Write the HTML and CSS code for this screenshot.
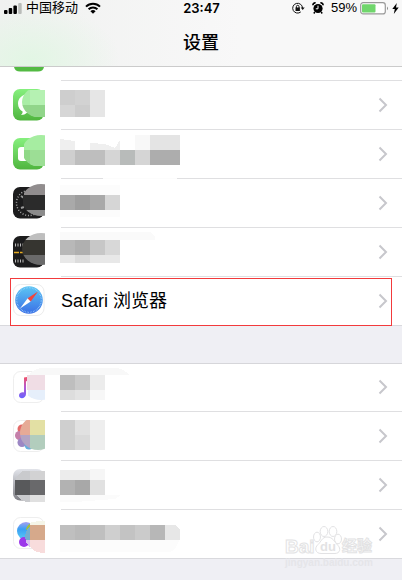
FILE: index.html
```html
<!DOCTYPE html>
<html lang="zh-CN">
<head>
<meta charset="utf-8">
<meta name="viewport" content="width=device-width, initial-scale=1">
<title>设置</title>
<link rel="stylesheet" href="styles.css">
</head>
<body>
<svg class="defs" aria-hidden="true">
  <defs>
    <linearGradient id="green" x2="0" y2="1"><stop stop-color="#86f07e"/><stop offset="1" stop-color="#4fb53e"/></linearGradient>
    <linearGradient id="blue" x2="0" y2="1"><stop stop-color="#5cc6f4"/><stop offset="1" stop-color="#3a6fe6"/></linearGradient>
    <linearGradient id="note" x2="0" y2="1"><stop stop-color="#f8505e"/><stop offset=".5" stop-color="#b45ad0"/><stop offset="1" stop-color="#6a62ff"/></linearGradient>
    <linearGradient id="silver" x2="0" y2="1"><stop stop-color="#e2e4ea"/><stop offset="1" stop-color="#808086"/></linearGradient>
    <linearGradient id="sphere" x2="0" y2="1"><stop stop-color="#a8a0f0"/><stop offset=".4" stop-color="#3aa0f4"/><stop offset="1" stop-color="#58cdf6"/></linearGradient>
    <clipPath id="veil"><ellipse cx="28" cy="13" rx="19" ry="16"/></clipPath>
    <clipPath id="veil-wide"><ellipse cx="25" cy="13" rx="18" ry="17"/></clipPath>
    <symbol id="chevron" viewBox="0 0 10 16"><path d="M1.500 1.500 8 8l-6.500 6.500" fill="none" stroke="#c7c7cc" stroke-width="2"/></symbol>
  </defs>
</svg>

<header class="header">
  <div class="status">
    <div class="status-left">
      <svg width="19" height="12" viewBox="0 0 19 12"><rect y="8" width="3.500" height="4" rx="1"/><rect x="4.700" y="6" width="3.500" height="6" rx="1"/><rect x="9.400" y="3.500" width="3.500" height="8.500" rx="1"/><rect x="14.200" y="1" width="3.500" height="11" rx="1" fill="#b9bcb9"/></svg>
      <span class="carrier">中国移动</span>
      <svg width="16" height="12" viewBox="0 0 16 12" fill="none" stroke="#000" stroke-width="2"><path d="M1 4.600a10 10 0 0 1 14 0M3.600 7.300a6.300 6.300 0 0 1 8.800 0"/><path d="M8 11.800 5.400 9.200a3.700 3.700 0 0 1 5.200 0z" fill="#000" stroke="none"/></svg>
    </div>
    <time class="time">23:47</time>
    <div class="status-right">
      <svg width="13" height="13" viewBox="0 0 13 13" fill="none" stroke="#111"><path d="M10.500 6A4.900 4.900 0 1 0 8.800 9.900"/><path d="M8.700 5.500h4L10.700 8z" fill="#111" stroke="none"/><rect x="3.500" y="5.500" width="4.400" height="3.500" fill="#111" stroke="none"/><path d="M4.400 6V4.600a1.300 1.300 0 0 1 2.600 0V6"/></svg>
      <svg class="alarm" width="12" height="12" viewBox="0 0 12 12"><circle cx="6" cy="6.500" r="4.600"/><path d="M.8 3.300A2.600 2.600 0 0 1 3.600.7M11.200 3.300A2.600 2.600 0 0 0 8.400.7M2.800 10l-1 1.500M9.200 10l1 1.500" stroke="#000" stroke-width="1.400"/><path d="M6 3.600v3.200H3.800" fill="none" stroke="#fff"/></svg>
      <span>59%</span>
      <svg width="29" height="13" viewBox="0 0 29 13"><rect x=".7" y=".7" width="24.600" height="11.200" rx="2.500" fill="#fff" stroke="#999" stroke-width="1.200"/><rect x="2" y="2.200" width="13.500" height="8.200" rx="1" fill="#70d66c"/><path d="M27 4.500v3.800q2-1.900 0-3.800" fill="#888"/></svg>
      <svg width="7" height="11" viewBox="0 0 7 11"><path d="M4.800 0 .3 6h2.500L1.800 11 6.700 4.600H4z"/></svg>
    </div>
  </div>
  <h1 class="title">设置</h1>
</header>

<main>
  <ul class="list list-first">
    <li class="row row-cut">
      <svg class="icon icon-cut" viewBox="0 0 32 5" aria-hidden="true"><path d="M1 0h30q-1 4.500-6 4.500H7Q2 4.500 1 0" fill="#53ba43"/></svg>
      <div class="body"></div>
    </li>
    <li class="row">
      <svg class="icon" viewBox="0 0 32 32" aria-hidden="true">
        <rect width="31" height="31.500" rx="7" fill="url(#green)"/>
        <path d="M16 5C9 5 5 9.500 5 14.500c0 4 2 6.500 4.600 8 .2 1.500-.7 2.500-1.600 3.500 2.500 0 4.500-1 5.500-2H20V5z" fill="#fff"/>
        <g clip-path="url(#veil)" shape-rendering="crispEdges"><path d="M9 1h23v15H9z" fill="#a9eda6"/><path d="M17 1h15v15H17z" fill="#b5f1b2"/><path d="M9 16h23v12H9z" fill="#91d58a"/></g>
      </svg>
      <div class="body">
        <svg class="mosaic" width="130" height="48" aria-hidden="true" shape-rendering="crispEdges"><path d="M0 9h30v15H0z" fill="#cecece"/><path d="M15 9h15v15H15z" fill="#d2d2d2"/><path d="M30 9h15v27H30z" fill="#e6e6e6"/><path d="M0 24h15v12H0z" fill="#d6d6d6"/><path d="M15 24h15v12H15z" fill="#cdcdcd"/></svg>
        <svg class="chevron"><use href="#chevron"/></svg>
      </div>
    </li>
    <li class="row">
      <svg class="icon" viewBox="0 0 32 32" aria-hidden="true">
        <rect width="31" height="31.500" rx="7" fill="url(#green)"/><rect x="5" y="9" width="15" height="14" rx="3" fill="#fff"/>
        <g clip-path="url(#veil)" shape-rendering="crispEdges"><path d="M11-3h21v15H11z" fill="#a6eda1"/><path d="M11 12h21v16H11z" fill="#8fd887"/><path d="M17 12h15v16H17z" fill="#9cde95"/></g>
      </svg>
      <div class="body">
        <svg class="mosaic" width="130" height="48" aria-hidden="true" shape-rendering="crispEdges"><path d="M0 9l15 2v9H0zM30 13l15 1 10 4 5-8v10H30z" fill="#efefef"/><path d="M75 5h15v15H75z" fill="#f8f8f8"/><path d="M90 5h30v15H90z" fill="#e4e4e4"/><path d="M0 20h15v15H0z" fill="#cfcfcf"/><path d="M15 20h30v15H15z" fill="#bebebe"/><path d="M45 20h15v15H45zM75 20h15v15H75z" fill="#d5d5d5"/><path d="M60 20h15v15H60z" fill="#b8bbba"/><path d="M90 20h30v15H90z" fill="#adadad"/><path d="M43 48h74v1H43z" fill="#fcfcfc"/></svg>
        <svg class="chevron"><use href="#chevron"/></svg>
      </div>
    </li>
    <li class="row">
      <svg class="icon" viewBox="0 0 32 32" aria-hidden="true">
        <rect width="31" height="31.500" rx="7" fill="#1c1c1d"/><circle cx="16" cy="16" r="12.500" fill="none" stroke="#aaa" stroke-width="1.500" stroke-dasharray="1 1.800"/><path d="M8 9l3 2M8 21l3-1" stroke="#999" stroke-width="2"/>
        <g clip-path="url(#veil)" shape-rendering="crispEdges"><path d="M11-3h21V8H11z" fill="#918d8e"/><path d="M10 8h22v15H10z" fill="#2b2b2b"/><path d="M11 23h21v6H11z" fill="#8b8b8b"/></g>
      </svg>
      <div class="body">
        <svg class="mosaic" width="130" height="48" aria-hidden="true" shape-rendering="crispEdges"><path d="M0 6h60v32H0z" fill="#fcfcfc"/><path d="M0 16h45v15H0z" fill="#a9a9a9"/><path d="M15 16h15v15H15z" fill="#9e9e9e"/><path d="M45 16h15v15H45z" fill="#d6d6d6"/></svg>
        <svg class="chevron"><use href="#chevron"/></svg>
      </div>
    </li>
    <li class="row">
      <svg class="icon" viewBox="0 0 32 32" aria-hidden="true">
        <rect width="31" height="31.500" rx="7" fill="#1c1c1d"/><path d="M2 9h10M2 25h10" stroke="#bbb" stroke-width="3" stroke-dasharray="1 1.500"/><path d="M1 16.500h9" stroke="#e6ac22" stroke-width="1.500" stroke-dasharray="5 1"/>
        <g clip-path="url(#veil)" shape-rendering="crispEdges"><path d="M9-5h23V4H9z" fill="#bebebe"/><path d="M9 4h23v15H9z" fill="#363530"/><path d="M9 19h23v11H9z" fill="#6a6a6a"/></g>
      </svg>
      <div class="body">
        <svg class="mosaic" width="130" height="48" aria-hidden="true" shape-rendering="crispEdges"><path d="M0 4h90l5 5v3H0z" fill="#fafafa"/><path d="M0 12h15v15H0z" fill="#b8b8b8"/><path d="M15 12h15v15H15z" fill="#b0b0b0"/><path d="M30 12h15v15H30z" fill="#c7c7c7"/><path d="M45 12h15v15H45z" fill="#d8d8d8"/><path d="M0 27h60v8H0z" fill="#e8e8e8"/><path d="M15 27h15v8H15z" fill="#dcdcdc"/></svg>
        <svg class="chevron"><use href="#chevron"/></svg>
      </div>
    </li>
    <li class="row row-marked">
      <svg class="icon" viewBox="0 0 32 32" aria-hidden="true">
        <rect x=".5" y="-.5" width="30.500" height="31" rx="7" fill="#fff" stroke="#ececec"/><circle cx="16" cy="15" r="13.800" fill="url(#blue)"/><circle cx="16" cy="15" r="12.300" fill="none" stroke="#a4d4fa" stroke-width="1.200" stroke-dasharray=".6 1"/><path d="M7 23.500 14.700 13.300l3 3.200z" fill="#fff"/><path d="M25 6.500 14.700 13.300l3 3.200z" fill="#f2453c"/>
      </svg>
      <div class="body">
        <a class="label" href="#safari">Safari 浏览器</a>
        <svg class="chevron"><use href="#chevron"/></svg>
      </div>
    </li>
  </ul>

  <ul class="list list-second">
    <li class="row">
      <svg class="icon" viewBox="0 0 32 32" aria-hidden="true">
        <rect x=".5" y=".5" width="30.500" height="31" rx="7" fill="#fff" stroke="#eee"/><path d="M11 6.500 20 5v4l-7 1.200V23c0 5-7 5.500-7 1.500 0-2.800 3-3.500 5-3z" fill="url(#note)"/>
        <g clip-path="url(#veil)" shape-rendering="crispEdges"><path d="M14 4h18v15H14z" fill="#f0dde5"/><path d="M15 19h17v11H15z" fill="#e6effb"/></g>
      </svg>
      <div class="body">
        <svg class="mosaic" width="130" height="48" aria-hidden="true" shape-rendering="crispEdges"><path d="M-30 10q6-5 14-5h74q7 2 11 7H-30z" fill="#f8f8f8"/><path d="M0 12h15v15H0z" fill="#bebebe"/><path d="M15 12h15v15H15z" fill="#cacaca"/><path d="M30 12h15v15H30z" fill="#ececec"/><path d="M0 27h15v10H0z" fill="#ddd"/><path d="M15 27h15v10H15z" fill="#e3e3e3"/><path d="M30 27h15v10H30z" fill="#f7f7f7"/></svg>
        <svg class="chevron"><use href="#chevron"/></svg>
      </div>
    </li>
    <li class="row">
      <svg class="icon" viewBox="0 0 32 32" aria-hidden="true">
        <rect x=".5" y=".5" width="30.500" height="31" rx="7" fill="#fff" stroke="#eee"/><circle cx="9" cy="9" r="4.500" fill="#e36b69"/><circle cx="6.500" cy="15.500" r="4.500" fill="#c580aa"/><circle cx="9" cy="22.500" r="4.500" fill="#9c87c4"/><circle cx="16" cy="25" r="4.500" fill="#68aedc"/>
        <g clip-path="url(#veil-wide)" shape-rendering="crispEdges"><path d="M7 0h10v15H7z" fill="#e6aa96"/><path d="M17 0h15v15H17z" fill="#e3e0a4"/><path d="M7 15h10v14H7z" fill="#b3a4c3"/><path d="M17 15h15v15H17z" fill="#b2cdbd"/></g>
      </svg>
      <div class="body">
        <svg class="mosaic" width="130" height="48" aria-hidden="true" shape-rendering="crispEdges"><path d="M0 8h15v30H0z" fill="#cfcfcf"/><path d="M15 8h15v15H15z" fill="#e1e1e1"/><path d="M15 23h15v15H15z" fill="#dadada"/><path d="M30 8h15v30H30z" fill="#eee"/></svg>
        <svg class="chevron"><use href="#chevron"/></svg>
      </div>
    </li>
    <li class="row">
      <svg class="icon" viewBox="0 0 32 32" aria-hidden="true">
        <rect width="31" height="31.500" rx="7" fill="url(#silver)"/>
        <g shape-rendering="crispEdges"><path d="M4 7l5-5h8v9H3zM4 26h28v7H16q-8 0-12-7" fill="#c9cacd"/><path d="M17 2h15v9H17z" fill="#d2d2d3"/><path d="M17 26h15v7H17z" fill="#e0e0e0"/><path d="M2 11h15v15H2z" fill="#58595b"/><path d="M17 11h15v15H17z" fill="#69696b"/></g>
      </svg>
      <div class="body">
        <svg class="mosaic" width="130" height="48" aria-hidden="true" shape-rendering="crispEdges"><path d="M0 34h61l-6 4-40 3H0z" fill="#fbfbfb"/><path d="M0 9h30v10H0z" fill="#ececec"/><path d="M30 8h15v11H30z" fill="#f6f6f6"/><path d="M0 19h15v15H0z" fill="#b2b2b2"/><path d="M15 19h15v15H15z" fill="#a8a8a8"/><path d="M30 19h15v15H30z" fill="#e1e1e1"/></svg>
        <svg class="chevron"><use href="#chevron"/></svg>
      </div>
    </li>
    <li class="row">
      <svg class="icon" viewBox="0 0 32 32" aria-hidden="true">
        <rect x=".5" y="-.5" width="30.500" height="31" rx="7" fill="#fff" stroke="#eee"/><circle cx="13" cy="13" r="9" fill="url(#sphere)"/><circle cx="11" cy="24" r="5" fill="#9c38ea"/><path d="M13 12q1-7 8-7l5 1-9 6z" fill="#a5bd38"/>
        <g shape-rendering="crispEdges"><path d="M17 5q4-2 15-2v4H17z" fill="#f5f5e8"/><path d="M12 19q1-8 5-11v14h-4z" fill="#74add0"/><path d="M17 7h15v15H17z" fill="#d6a98b"/><path d="M13 22h4v7q-4-3-4-7" fill="#d9c0f0"/><path d="M17 22h15v13q-10 0-15-6z" fill="#f8dcdc"/></g>
      </svg>
      <div class="body">
        <svg class="mosaic" width="130" height="48" aria-hidden="true" shape-rendering="crispEdges"><path d="M0 30h119q-2 9-9 12H0z" fill="#fcfcfc"/><path d="M0 15h105v15H0z" fill="#bfbfbf"/><path d="M15 15h15v15H15z" fill="#bababa"/><path d="M45 15h15v15H45z" fill="#cfcfcf"/><path d="M60 15h15v15H60z" fill="#c3c3c3"/><path d="M75 15h15v15H75z" fill="#cbcbcb"/><path d="M90 15h15v15H90z" fill="#b7b7b7"/><path d="M105 15h10l5 5v10h-15z" fill="#e7e7e7"/></svg>
        <svg class="chevron"><use href="#chevron"/></svg>
      </div>
    </li>
  </ul>
</main>

<svg class="watermark" viewBox="0 0 90 44" aria-hidden="true">
  <g fill="#fff" stroke="#dedee0">
    <ellipse cx="33" cy="11" rx="3.500" ry="4.800"/><ellipse cx="40" cy="5.500" rx="3.800" ry="5"/><ellipse cx="49" cy="5.500" rx="3.800" ry="5"/><ellipse cx="54" cy="13" rx="3.500" ry="4.800"/>
    <path d="M43 11c-5 0-6 5-9 7.500-4 3.500-2.500 9 3 9h14c5 0 6-5 3-8-4-4-5-8.500-11-8.500z"/>
    <text class="wm-brand" x="1" y="27">Bai</text>
    <text class="wm-cn" x="58" y="25">经验</text>
  </g>
  <text class="wm-du" x="36" y="25">du</text>
  <text class="wm-url" x="1" y="40">jingyan.baidu.com</text>
</svg>
</body>
</html>
```
FILE: styles.css
```css
* {
  box-sizing: border-box;
}

body {
  position: relative;
  margin: 0;
  min-height: 100vh;
  background: #efeff4;
  color: #000;
  font-family: "Liberation Sans", "Noto Sans CJK SC", sans-serif;
}

.defs {
  position: absolute;
  width: 0;
  height: 0;
}

.header {
  height: 67px;
  border-bottom: 1px solid #cbcbcb;
  background:
    radial-gradient(ellipse 90px 55px at 30px 60px, #e2f6e4, transparent),
    linear-gradient(90deg, #f0f1f0, #f8f8f8 60%);
}

.status {
  display: grid;
  grid-template-columns: 1fr auto 1fr;
  align-items: center;
  height: 16px;
  padding: 0 3px 0 4px;
  font-size: 13px;
  line-height: 16px;
}

.status-left,
.status-right {
  display: flex;
  align-items: center;
}

.carrier {
  margin: 0 7px 0 3px;
}

.time {
  font-family: Inter, sans-serif;
  font-weight: 600;
}

.status-right {
  justify-content: flex-end;
  gap: 3px;
}

.alarm {
  margin: 0 4px;
}

.title {
  margin: 14px 0 0;
  font-size: 18px;
  font-weight: 500;
  line-height: 26px;
  text-align: center;
}

.list {
  margin: 0;
  padding: 0;
  list-style: none;
  background: #fff;
}

.list-second {
  margin-top: 37px;
  box-shadow: inset 0 1px #d6d6da;
}

.row {
  position: relative;
  display: flex;
  height: 49px;
  padding-left: 13px;
}

.row:last-child {
  border-bottom: 1px solid #d9d9dd;
}

.row-cut {
  height: 14px;
}

.icon {
  flex: none;
  width: 32px;
  height: 32px;
  margin: 8px 16px 0 0;
  overflow: visible;
}

.icon-cut {
  height: 5px;
  margin-top: 0;
}

.body {
  display: flex;
  flex: 1;
  align-items: center;
  justify-content: space-between;
  border-bottom: 1px solid #dfdfe1;
  padding-right: 14px;
}

.row:last-child .body {
  border-bottom: 0;
}

.mosaic {
  margin-left: -1px;
  overflow: visible;
}

.label {
  color: inherit;
  font-size: 18px;
  line-height: 26px;
  text-decoration: none;
}

.chevron {
  width: 10px;
  height: 16px;
}

.row-marked::after {
  content: "";
  position: absolute;
  inset: 1px 10px -1px;
  border: 1px solid #f23a3c;
}

.watermark {
  position: absolute;
  right: 28px;
  top: 526px;
  width: 90px;
  height: 44px;
  opacity: 0.85;
}

.watermark text {
  font-family: "Liberation Sans", "Noto Sans CJK SC", sans-serif;
  font-weight: 700;
}

.wm-brand {
  font-size: 19px;
}

.wm-cn {
  font-size: 15px;
}

.wm-du {
  font-size: 13px;
  fill: #dedee0;
}

.wm-url {
  font-size: 10px;
  fill: #e4e4e8;
}
```
